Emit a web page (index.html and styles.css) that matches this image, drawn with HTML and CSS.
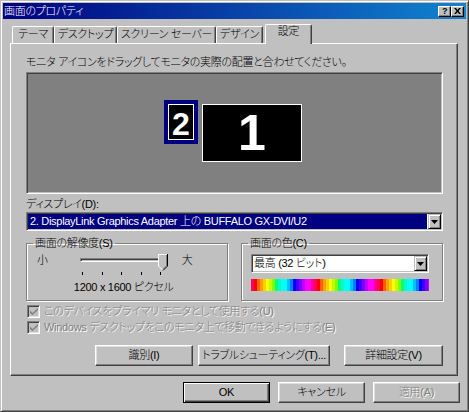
FILE: index.html
```html
<!DOCTYPE html>
<html lang="ja">
<head>
<meta charset="utf-8">
<title>画面のプロパティ</title>
<link rel="stylesheet" href="styles.css">
</head>
<body>
<div class="window">
  <div class="titlebar">
    <span class="title">画面のプロパティ</span>
    <div class="caption-btns">
      <span class="cap cap-help">?</span>
      <span class="cap cap-close">
        <svg width="7" height="6" viewBox="0 0 7 6"><path d="M0 0h2l1.5 2L5 0h2L4.5 3 7 6H5L3.5 4 2 6H0l2.5-3z" fill="#000"/></svg>
      </span>
    </div>
  </div>

  <div class="tabs">
    <div class="tab tab-theme">テーマ</div>
    <div class="tab tab-desktop">デスクトップ</div>
    <div class="tab tab-saver">スクリーン セーバー</div>
    <div class="tab tab-design">デザイン</div>
    <div class="tab tab-settings tab-active">設定</div>
  </div>

  <div class="panel">
    <p class="hint">モニタ アイコンをドラッグしてモニタの実際の配置と合わせてください。</p>

    <div class="preview">
      <div class="mon mon-2"><div class="mon-screen"><span>2</span></div></div>
      <div class="mon mon-1"><span>1</span></div>
    </div>

    <div class="field-label">ディスプレイ(D):</div>
    <div class="combo combo-display">
      <div class="combo-text combo-focus">2. DisplayLink Graphics Adapter 上の BUFFALO GX-DVI/U2</div>
      <div class="combo-btn"><svg width="7" height="4" viewBox="0 0 7 4"><path d="M0 0h7L3.5 4z" fill="#000"/></svg></div>
    </div>

    <div class="groups">
      <fieldset class="group">
        <legend>画面の解像度(S)</legend>
        <div class="res-row">
          <span class="res-end res-small">小</span>
          <div class="slider-col">
            <div class="slider">
              <div class="track"></div>
              <svg class="thumb" width="10" height="17" viewBox="0 0 10 17">
                <path d="M0 0h10v12l-5 5-5-5z" fill="#c0c0c0"/>
                <path d="M0.5 12V0.5h8.5" fill="none" stroke="#fff"/>
                <path d="M0.5 12l4.5 4.5" fill="none" stroke="#fff"/>
                <path d="M9.5 0v12l-4.5 4.5" fill="none" stroke="#000"/>
                <path d="M8.5 1v10.6l-3.5 3.5" fill="none" stroke="#808080"/>
              </svg>
            </div>
            <div class="ticks"><i></i><i></i><i></i><i></i><i></i></div>
            <div class="res-value">1200 x 1600 ピクセル</div>
          </div>
          <span class="res-end res-large">大</span>
        </div>
      </fieldset>

      <fieldset class="group">
        <legend>画面の色(C)</legend>
        <div class="combo combo-color">
          <div class="combo-text">最高 (32 ビット)</div>
          <div class="combo-btn"><svg width="7" height="4" viewBox="0 0 7 4"><path d="M0 0h7L3.5 4z" fill="#000"/></svg></div>
        </div>
        <div class="color-bar"></div>
      </fieldset>
    </div>

    <label class="check check-first">
      <span class="check-box"><svg width="8" height="7" viewBox="0 0 8 7"><path d="M0 2.5v2.5l2.5 2 5.5-5V0L2.5 5z" fill="#808080"/></svg></span>
      <span class="check-text">このデバイスをプライマリ モニタとして使用する(U)</span>
    </label>
    <label class="check check-second">
      <span class="check-box"><svg width="8" height="7" viewBox="0 0 8 7"><path d="M0 2.5v2.5l2.5 2 5.5-5V0L2.5 5z" fill="#808080"/></svg></span>
      <span class="check-text">Windows デスクトップをこのモニタ上で移動できるようにする(E)</span>
    </label>

    <div class="panel-buttons">
      <button class="btn btn-identify">識別(I)</button>
      <button class="btn btn-trouble">トラブルシューティング(T)...</button>
      <button class="btn btn-advanced">詳細設定(V)</button>
    </div>
  </div>

  <div class="dialog-buttons">
    <button class="btn btn-dialog btn-default">OK</button>
    <button class="btn btn-dialog">キャンセル</button>
    <button class="btn btn-dialog btn-disabled">適用(A)</button>
  </div>
</div>
</body>
</html>
```

FILE: styles.css
```css
* {
  box-sizing: border-box;
}

html,
body {
  margin: 0;
  background: #c0c0c0;
}

/* Latin from Liberation Sans, kana and kanji from Noto Sans CJK JP */
body {
  font-family: "Liberation Sans", "Noto Sans CJK JP", sans-serif;
  font-size: 11px;
  font-weight: 300;
  line-height: 13px;
  letter-spacing: -0.3px;
  font-feature-settings: "palt" 1;
  color: #000;
}

/* Classic raised window frame */
.window {
  width: 469px;
  height: 412px;
  padding: 2px;
  border: 1px solid;
  border-color: #c0c0c0 #404040 #404040 #c0c0c0;
  box-shadow: inset 1px 1px #fff, inset -1px -1px #808080;
  background: #c0c0c0;
  display: flex;
  flex-direction: column;
}

.titlebar {
  height: 16px;
  flex: none;
  display: flex;
  align-items: center;
  justify-content: space-between;
  padding: 0 2px 0 1px;
  background: linear-gradient(to right, #000080, #1084d0);
  color: #fff;
}

.title {
  line-height: 16px;
}

.caption-btns {
  display: flex;
}

.cap {
  width: 13px;
  height: 11px;
  display: flex;
  align-items: center;
  justify-content: center;
  background: #c0c0c0;
  border: 1px solid;
  border-color: #fff #000 #000 #fff;
  box-shadow: inset -1px -1px #808080;
  color: #000;
}

.cap-help {
  font-weight: bold;
  font-size: 9px;
  line-height: 9px;
}

/* Tab strip */
.tabs {
  display: flex;
  align-items: flex-end;
  margin: 5px 0 -1px 9px;
  position: relative;
  z-index: 1;
}

.tab {
  height: 17px;
  margin-bottom: 1px;
  border: 1px solid;
  border-bottom: 0;
  border-color: #fff #404040 #404040 #fff;
  border-radius: 2px 2px 0 0;
  box-shadow: inset -1px 0 #808080;
  line-height: 15px;
  text-align: center;
  white-space: nowrap;
  background: #c0c0c0;
}

.tab-theme { width: 42px; }
.tab-desktop { width: 63px; }
.tab-saver { width: 99px; }
.tab-design { width: 47px; }

.tab-settings {
  width: 47px;
  margin-left: 2px;
}

.tab-active {
  height: 20px;
  margin-bottom: 0;
  line-height: 13px;
}

/* Tab page */
.panel {
  height: 333px;
  flex: none;
  margin: 0 8px 0 7px;
  padding: 0 14px 0 15px;
  border: 1px solid;
  border-color: #fff #404040 #404040 #fff;
  box-shadow: inset -1px -1px #808080;
  display: flex;
  flex-direction: column;
}

.hint {
  margin: 12px 0 0;
  white-space: nowrap;
}

.preview {
  position: relative;
  height: 122px;
  margin-top: 3px;
  background: #808080;
  border: 1px solid;
  border-color: #808080 #fff #fff #808080;
  box-shadow: inset 1px 1px #404040, inset -1px -1px #c0c0c0;
}

.mon {
  position: absolute;
  display: flex;
  align-items: center;
  justify-content: center;
  font-weight: bold;
  letter-spacing: 0;
  color: #fff;
}

.mon-2 {
  left: 137px;
  top: 27px;
  width: 34px;
  height: 44px;
  border: 4px solid #000080;
}

.mon-screen {
  width: 100%;
  height: 100%;
  background: #000;
  border: 1px solid #fff;
  display: flex;
  align-items: center;
  justify-content: center;
  padding-top: 3px;
  font-size: 32px;
  line-height: 32px;
}

.mon-1 {
  left: 175px;
  top: 31px;
  width: 100px;
  height: 58px;
  background: #000;
  border: 1px solid #fff;
  font-size: 50px;
  line-height: 50px;
}

.field-label {
  margin-top: 4px;
}

/* Sunken combo boxes */
.combo {
  display: flex;
  height: 19px;
  padding: 1px;
  background: #fff;
  border: 1px solid;
  border-color: #808080 #fff #fff #808080;
  box-shadow: inset 1px 1px #404040, inset -1px -1px #c0c0c0;
}

.combo-display {
  margin-top: 1px;
}

.combo-text {
  flex: 1;
  margin-right: 1px;
  padding-left: 2px;
  line-height: 15px;
  white-space: nowrap;
  overflow: hidden;
}

.combo-focus {
  background: #000080;
  color: #fff;
}

.combo-btn {
  width: 13px;
  display: flex;
  align-items: center;
  justify-content: center;
  background: #c0c0c0;
  border: 1px solid;
  border-color: #c0c0c0 #000 #000 #c0c0c0;
  box-shadow: inset 1px 1px #fff, inset -1px -1px #808080;
}

/* Group boxes */
.groups {
  display: flex;
  justify-content: space-between;
  margin-top: 6px;
}

.group {
  width: 202px;
  margin: 0;
  padding: 0 0 6px;
  min-width: 0;
  border: 1px solid #808080;
  box-shadow: inset 1px 1px #fff, 1px 1px #fff;
}

.group legend {
  margin-left: 6px;
  padding: 0 2px;
  line-height: 13px;
}

.res-row {
  display: flex;
  align-items: flex-start;
  margin-top: 4px;
  padding-left: 10px;
}

.res-end {
  line-height: 13px;
}

.slider-col {
  width: 88px;
  margin: 0 14px 0 32px;
  display: flex;
  flex-direction: column;
  align-items: center;
}

.slider {
  position: relative;
  width: 88px;
  height: 17px;
}

.track {
  margin-top: 4px;
  height: 4px;
  border: 1px solid;
  border-color: #808080 #fff #fff #808080;
  box-shadow: inset 1px 1px #404040;
  background: #c0c0c0;
}

.thumb {
  position: absolute;
  right: 0;
  top: 0;
}

.ticks {
  width: 79px;
  height: 3px;
  margin: 1px 4px 0 0;
  display: flex;
  justify-content: space-between;
}

.ticks i {
  width: 1px;
  background: #000;
}

.res-value {
  margin-top: 6px;
  white-space: nowrap;
}

.combo-color {
  width: 178px;
  margin: 4px 0 0 9px;
}

.combo-color .combo-text {
  padding-left: 1px;
}

.color-bar {
  width: 178px;
  height: 12px;
  margin: 6px 0 0 9px;
  background: repeating-linear-gradient(to right,
    #ff0060 0 3px, #ff0000 3px 6px, #ff6000 6px 9px, #ffa000 9px 12px,
    #ffd000 12px 15px, #ffff00 15px 18px, #c0ff00 18px 21px, #80ff00 21px 24px,
    #00ff80 24px 27px, #00ffc0 27px 30px, #00ffff 30px 36px, #00c0ff 36px 39px,
    #0080ff 39px 42px, #0000ff 42px 45px, #4000ff 45px 48px, #8000ff 48px 51px,
    #c000ff 51px 54px, #ff00ff 54px 60px, #ff0090 60px 63px);
}

/* Disabled check boxes */
.check {
  display: flex;
  align-items: center;
  height: 13px;
  padding-left: 1px;
}

.check-first {
  margin-top: 4px;
}

.check-second {
  margin-top: 3px;
}

.check-box {
  width: 13px;
  height: 13px;
  margin-right: 4px;
  display: flex;
  align-items: center;
  justify-content: center;
  background: #c0c0c0;
  border: 1px solid;
  border-color: #808080 #fff #fff #808080;
  box-shadow: inset 1px 1px #404040, inset -1px -1px #dfdfdf;
}

.check-text {
  color: #808080;
  text-shadow: 1px 1px #fff;
  white-space: nowrap;
}

/* Push buttons */
.btn {
  height: 21px;
  padding: 0;
  font: inherit;
  letter-spacing: inherit;
  color: #000;
  background: #c0c0c0;
  border: 1px solid;
  border-color: #fff #404040 #404040 #fff;
  box-shadow: inset -1px -1px #808080, inset 1px 1px #dfdfdf;
  white-space: nowrap;
}

.panel-buttons {
  display: flex;
  justify-content: flex-end;
  margin-top: 11px;
}

.btn-identify {
  width: 98px;
}

.btn-trouble {
  width: 132px;
  margin-left: 5px;
}

.btn-advanced {
  width: 99px;
  margin-left: 14px;
}

.dialog-buttons {
  display: flex;
  justify-content: flex-end;
  gap: 8px;
  margin: 6px 6px 0 0;
}

.btn-dialog {
  width: 87px;
}

.btn-default {
  border-color: #000;
  box-shadow: inset 1px 1px #fff, inset -1px -1px #404040, inset -2px -2px #808080;
}

.btn-disabled {
  color: #808080;
  text-shadow: 1px 1px #fff;
}
```
